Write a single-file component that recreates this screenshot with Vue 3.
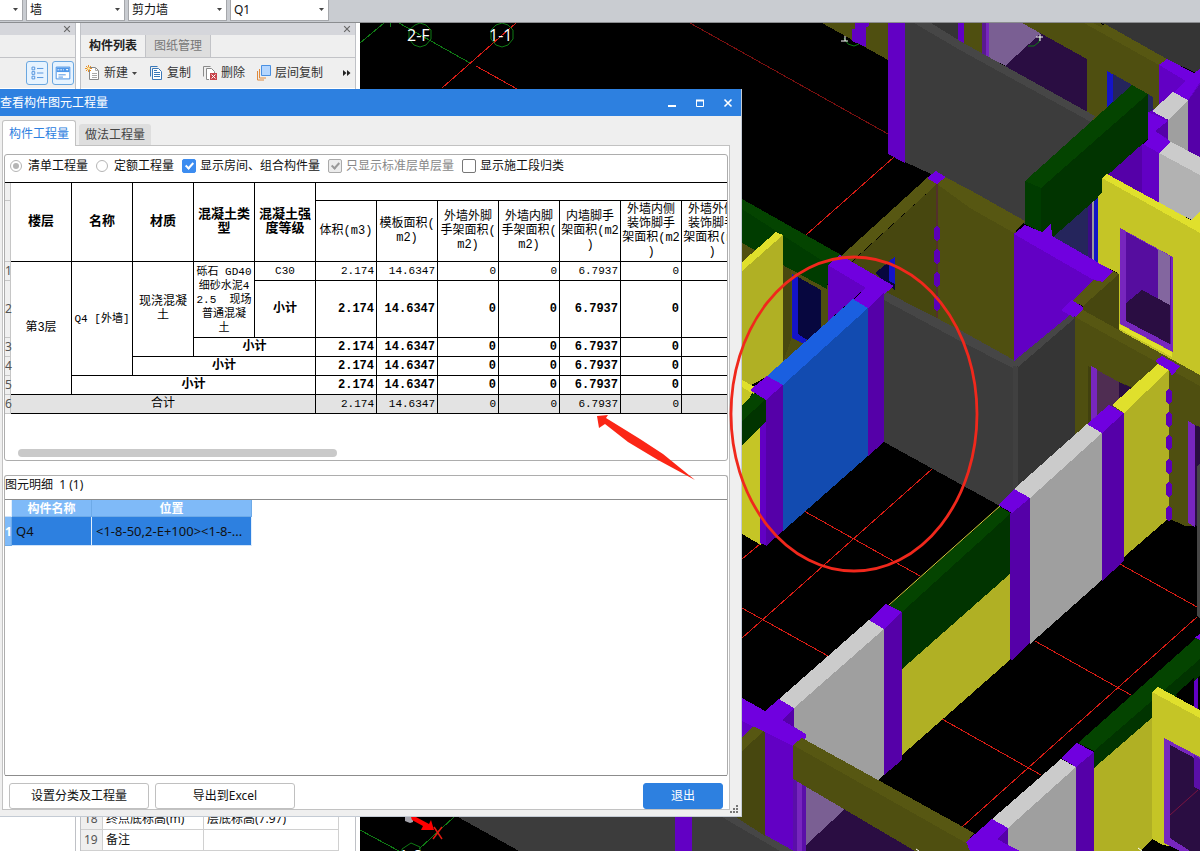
<script setup>
import { ref } from 'vue'

const combos = [
  { id: 'type', label: '构件类型', value: '墙' },
  { id: 'kind', label: '构件类别', value: '剪力墙' },
  { id: 'member', label: '构件', value: 'Q1' }
]

const billType = ref('list')
const showRoom = ref(true)
const standardOnly = ref(true)
const showStage = ref(false)

const headings = [
  ['楼层'],
  ['名称'],
  ['材质'],
  ['混凝土类', '型'],
  ['混凝土强', '度等级']
]
const measures = [
  ['体积(m3)'],
  ['模板面积(', 'm2)'],
  ['外墙外脚', '手架面积(', 'm2)'],
  ['外墙内脚', '手架面积(', 'm2)'],
  ['内墙脚手', '架面积(m2', ')'],
  ['外墙内侧', '装饰脚手', '架面积(m2', ')'],
  ['外墙外侧', '装饰脚手', '架面积(m2', ')']
]
const values = ['2.174', '14.6347', '0', '0', '6.7937', '0', '0']

const rows = [
  {
    cls: 'plain',
    cells: [
      { lines: ['第3层'], rows: 5, cls: 'big' },
      { lines: ['Q4 [外墙]'], rows: 4 },
      { lines: ['现浇混凝', '土'], rows: 3, cls: 'big' },
      { lines: ['砾石 GD40', '细砂水泥4', '2.5  现场', '普通混凝', '土'], rows: 2 },
      { lines: ['C30'] }
    ]
  },
  { cls: 'sub tall', cells: [{ lines: ['小计'] }] },
  { cls: 'sub', cells: [{ lines: ['小计'], cols: 2 }] },
  { cls: 'sub', cells: [{ lines: ['小计'], cols: 3 }] },
  { cls: 'sub', cells: [{ lines: ['小计'], cols: 4 }] },
  { cls: 'total', cells: [{ lines: ['合计'], cols: 5 }] }
]

// wall and beam colours
const c = {
  pt: '#7000df', pf: '#6200c4', pd: '#5500a8', fr: '#7726be',
  ot: '#575712', of: '#4f4f10', od: '#47470f',
  gt: '#464646', gf: '#3c3c3c', gd: '#353535',
  bt: '#044400', bs: '#003c00', bf: '#013400',
  yt: '#e0e02c', yf: '#c5c526', yd: '#b0b024',
  wt: '#cbcbcb', wf: '#9f9f9f', wl: '#b2b2b2',
  glass: '#2a0d42', haze: '#7a5f93', blue: '#1414c8', navy: '#07073f'
}

const axes = [
  ['#7a0f0f', 690, 23, 888, 134],
  ['#d81c14', 894, 157, 806, 235],
  ['#d81c14', 516, 23, 442, 88],
  ['#d81c14', 476, 66, 517, 89],
  ['#0f7a14', 360, 43, 384, 23],
  ['#0f7a14', 390, 23, 390, 27],
  ['#0f7a14', 399, 23, 470, 63],
  ['#0f7a14', 360, 830, 399, 851],
  ['#0f7a14', 454, 817, 419, 849],
  ['#d81c14', 804, 511, 920, 576],
  ['#d81c14', 932, 469, 742, 638],
  ['#d81c14', 760, 544, 742, 559],
  ['#d81c14', 742, 608, 828, 656],
  ['#d81c14', 942, 719, 1041, 775],
  ['#d81c14', 1120, 564, 1197, 607],
  ['#d81c14', 1035, 641, 1131, 695],
  ['#d81c14', 1197, 617, 962, 827]
]

// painted back to front
const solids = [
  // top row of rooms
  [c.of, '822,23 900,23 900,66 888,60'],
  [c.pf, '855,23 869,23 869,26 866,27 866,47 852,41 852,29 855,29'],
  [c.gd, '917,23 960,23 960,50'],
  [c.pf, '958,23 964,23 964,45 958,42'],
  [c.of, '964,23 983,23 983,56 964,46'],
  ['#5a1a90', '982,23 986,23 986,58 982,56'],
  [c.fr, '986,23 989,23 989,60 986,58'],
  [c.haze, '989,23 1022,23 1041,33 1006,66 989,58'],
  [c.glass, '1005,66 1041,33 1088,59 1088,116'],
  [c.of, '1022,23 1100,23 1160,62 1160,125 1087,120 1087,59'],
  [c.gd, '1098,23 1200,23 1200,75 1167,59 1105,24'],
  [c.ot, '1084,23 1093,23 1101,27 1105,24 1167,59 1159,65'],
  [c.blue, '1107,71 1114,75 1114,110 1107,110'],
  ['#25255c', '1113,74 1153,97 1153,120 1113,115'],
  [c.pf, '888,23 905,23 905,163 888,154'],
  [c.gf, '905,23 914,23 1092,120 1092,145 1025,224 970,192 905,162'],
  [c.gt, '914,23 931,23 960,41 1095,116 1091,122 960,50'],
  // right hand purple walls
  [c.pf, '1159,64 1200,82 1200,160 1175,160 1148,139 1148,113 1159,106'],
  [c.pt, '1159,65 1167,59 1194,73 1200,69 1200,82 1188,100 1173,93 1186,81'],
  [c.pd, '1188,101 1200,84 1200,158 1188,152'],
  [c.wt, '1152,111 1173,92 1188,100 1168,120'],
  [c.wf, '1168,120 1188,101 1188,152 1168,142'],
  [c.pd, '1168,119 1155,131 1168,139'],
  [c.pd, '1107,175 1143,143 1143,194'],
  [c.pf, '1142,143 1159,152 1159,203 1142,194'],
  [c.pt, '1148,112 1168,121 1155,131 1171,142 1159,153 1143,144 1148,139'],
  [c.wt, '1171,142 1200,157 1200,175 1159,153'],
  [c.wl, '1159,153 1200,175 1200,212 1192,220 1159,203'],
  // slate glazing behind the green beam
  ['#25255c', '1050,237 1088,204 1088,258'],
  ['#3a0a86', '1088,204 1093,200 1093,261 1088,258'],
  ['#9a9a9a', '1092,200 1094,200 1094,261 1092,261'],
  [c.blue, '1094,199 1098,195 1098,263 1094,261'],
  // olive corner
  [c.od, '937,184 937,345 884,300 884,293 894,286 852,262'],
  [c.ot, '840,257 928,177 937,184 850,263'],
  [c.of, '937,184 1016,228 1016,362 960,334 937,320'],
  [c.ot, '937,184 945,177 970,190 1025,221 1014,233 970,208'],
  [c.pt, '927,178 936,171 946,177 937,184'],
  [c.od, '884,270 893,257 898,257 898,295 884,290'],
  [c.navy, '875,273 895,257 895,290'],
  [c.blue, '889,261 895,257 895,284 889,281'],
  ['#53302c', '936,184 938,184 938,318 936,317'],
  // purple slab and olive pillar
  [c.pf, '1014,233 1103,281 1072,302 1076,314 1014,361'],
  [c.bs, '1025,181 1041,188 1041,232 1025,224'],
  [c.bf, '1041,188 1148,94 1148,139 1102,180 1102,194 1053,237 1041,232'],
  [c.bt, '1025,181 1132,85 1148,94 1041,188'],
  [c.pt, '1014,234 1025,225 1042,232 1051,224 1052,236 1113,271 1102,282 1092,279'],
  // yellow wall, upper right
  [c.yf, '1102,178 1200,230 1200,376 1172,360 1118,330 1118,273 1098,263 1098,196 1102,193'],
  [c.yt, '1102,178 1107,174 1191,220 1200,212 1200,233'],
  [c.fr, '1120,228 1173,257 1173,352 1120,324'],
  ['#560d9f', '1126,232 1171,257 1171,344 1126,320'],
  ['#83669f', '1158,249 1170,256 1170,306 1158,299'],
  [c.glass, '1126,303 1142,290 1170,305 1170,344 1126,321'],
  [c.yt, '1119,324 1172,352 1172,357 1118,328'],
  [c.od, '1083,306 1119,274 1119,332 1083,314'],
  [c.ot, '1072,301 1094,280 1103,282 1113,271 1119,274 1083,306'],
  // olive wall, lower right
  [c.of, '1075,317 1200,380 1200,525 1185,526 1168,518 1075,440'],
  [c.ot, '1075,317 1083,310 1200,375 1200,386'],
  ['#41410e', '1088,366 1119,382 1135,388 1108,415 1088,425'],
  [c.fr, '1091,366 1097,369 1097,425 1091,425'],
  ['#4f2d52', '1097,370 1119,382 1119,405 1097,425'],
  [c.glass, '1119,382 1132,388 1119,400'],
  [c.pt, '1061,310 1072,300 1083,307 1083,310 1074,318'],
  [c.fr, '1188,421 1195,425 1195,527 1188,523'],
  [c.glass, '1195,425 1200,427 1200,528 1195,525'],
  [c.gt, '1197,466 1200,463 1200,618 1197,616'],
  // grey walls
  [c.gf, '884,297 1016,365 1016,492 1000,506 884,442'],
  [c.gt, '884,291 960,330 1014,360 1018,367 1013,368 960,341 884,300'],
  [c.gd, '1016,367 1075,316 1075,440 1016,492'],
  [c.gt, '1014,361 1070,315 1075,318 1018,367'],
  ['#404040', '1013,366 1018,367 1018,488 1013,490'],
  // green beam and yellow wall on the left
  [c.of, '742,235 828,285 828,335 783,362 742,345'],
  [c.bs, '742,205 830,262 827,289 742,243'],
  [c.bt, '742,199 843,256 829,265 742,209'],
  [c.od, '783,265 791,270 791,340 783,362'],
  [c.blue, '792,274 798,277 798,331 808,338 804,344 792,338'],
  [c.navy, '798,277 821,290 821,335 809,341 798,334'],
  [c.yd, '742,270 783,235 783,362 766,377 742,390'],
  [c.yt, '742,262 776,232 783,235 742,271'],
  [c.yf, '742,385 756,392 742,405'],
  [c.yt, '742,380 755,387 752,393 742,387'],
  // ringed corner
  [c.pf, '828,265 868,286 853,299 828,321'],
  [c.pt, '828,265 840,255 894,286 868,308 853,300 866,288'],
  [c.pd, '868,308 884,293 884,442 868,456'],
  ['#124bb0', '783,385 868,308 868,456 783,531'],
  ['#1a5fe0', '767,376 853,299 868,308 783,385'],
  [c.yf, '742,440 761,425 761,545 742,534'],
  [c.pf, '760,425 767,400 767,546 760,543'],
  [c.pd, '766,400 783,385 783,531 766,546'],
  [c.bf, '742,412 752,393 766,400 766,422 742,445'],
  [c.bt, '742,405 754,393 766,399 742,421'],
  [c.pt, '750,390 767,376 783,385 766,400'],
  // long wall
  [c.yd, '1124,413 1169,370 1169,518 1124,557'],
  [c.yt, '1112,405 1158,364 1169,370 1124,413'],
  [c.pt, '1155,361 1162,356 1180,366 1172,376 1169,370 1158,364'],
  [c.pd, '1102,433 1124,413 1124,561 1102,581'],
  [c.pt, '1087,424 1109,405 1124,413 1102,433'],
  [c.wf, '1030,498 1102,433 1102,580 1030,644'],
  [c.wt, '1014,489 1087,424 1102,433 1030,498'],
  [c.yd, '902,669 1011,573 1011,659 902,755'],
  [c.bf, '902,612 1011,513 1011,573 902,669'],
  [c.bt, '889,606 1000,507 1011,513 902,612'],
  [c.pd, '1010,513 1030,498 1030,643 1012,660 1010,659'],
  [c.pt, '998,505 1014,489 1030,498 1012,513'],
  [c.wf, '794,708 884,629 884,775 878,780 806,742 794,735'],
  [c.wt, '779,699 869,620 884,629 794,708'],
  [c.pd, '884,629 902,612 902,760 884,775'],
  [c.pt, '869,620 886,604 902,612 884,629'],
  // bottom left corner
  [c.gf, '458,817 722,817 793,851 519,851'],
  [c.gt, '722,817 742,817 795,851 780,851'],
  [c.pf, '675,817 692,817 692,851 675,851'],
  [c.pf, '742,715 757,722 742,738'],
  [c.od, '736,817 742,750 765,730 765,836'],
  [c.ot, '742,738 755,724 765,730 742,751'],
  [c.haze, '806,780 850,806 806,845'],
  [c.glass, '845,809 916,851 806,851 806,845'],
  [c.pf, '765,730 794,743 794,851 765,835'],
  ['#5a0fa8', '793,775 806,782 806,851 793,851'],
  [c.fr, '797,778 802,781 802,851 797,851'],
  [c.pd, '794,708 782,720 794,728'],
  [c.pt, '742,698 765,711 779,699 794,708 782,720 806,734 806,738 793,746 765,732 742,721'],
  [c.of, '793,745 966,842 970,851 915,851 793,779'],
  [c.ot, '793,745 802,738 974,833 966,843'],
  // bottom right rooms
  [c.pt, '1194,638 1200,634 1200,642'],
  [c.pf, '1194,677 1198,673 1198,712 1194,709'],
  [c.yd, '1094,768 1152,717 1152,840 1140,851 1094,851'],
  [c.bf, '1094,751 1200,657 1200,676 1094,768'],
  [c.bt, '1078,743 1196,638 1200,640 1200,659 1094,751'],
  ['#000', '1176,694 1194,678 1194,709 1188,709'],
  [c.yf, '1152,692 1200,716 1200,851 1163,845 1152,839'],
  [c.yt, '1152,692 1158,687 1200,710 1200,718'],
  [c.fr, '1164,738 1200,757 1200,851 1180,851 1164,843'],
  [c.glass, '1170,745 1200,761 1200,851 1190,851 1170,838'],
  ['#5a0fa8', '1194,755 1200,759 1200,790 1194,787'],
  [c.pd, '1076,767 1094,752 1094,851 1076,851'],
  [c.pt, '1061,758 1077,743 1094,752 1076,767'],
  [c.wf, '1008,828 1076,767 1076,851 1020,851 1008,846'],
  [c.wt, '992,819 1061,759 1076,767 1008,828'],
  [c.pt, '966,842 992,819 1008,828 997,839 1020,851 970,851'],
  [c.pd, '997,839 1008,829 1008,845']
]

const ties = [
  [934, 226], [934, 249], [934, 272], [934, 296],
  [1166, 389], [1166, 412], [1166, 435], [1166, 459], [1166, 482], [1166, 506]
]

// the lit pixels of the wall's far edge
const edges = [
  ['#d8d83a', 889, 605, 1000, 506],
  ['#7a1440', 1170, 815, 1198, 790]
]
</script>

<template>
  <div class="app">
    <header class="top-bar">
      <div class="combo first">
        <select aria-label="楼层"><option></option></select>
        <svg class="caret" viewBox="0 0 7 4"><path d="M0 0h7L3.5 4z" /></svg>
      </div>
      <div v-for="item in combos" :key="item.id" class="combo">
        <select :id="item.id" :aria-label="item.label"><option>{{ item.value }}</option></select>
        <svg class="caret" viewBox="0 0 7 4"><path d="M0 0h7L3.5 4z" /></svg>
      </div>
    </header>

    <main class="workspace">
      <section class="panel">
        <div class="panel-head">
          <button class="close" aria-label="关闭"><svg viewBox="0 0 7 7"><path d="M1 1l5 5M6 1L1 6" /></svg></button>
        </div>
        <div class="panel-tabs"></div>
        <div class="tools end">
          <button class="view-btn" aria-label="列表">
            <svg viewBox="0 0 22 24">
              <path d="M5.500 5.500h3v3h-3zM5.500 10.500h3v3h-3zM5.500 15.500h3v3h-3z" fill="none" stroke="#4d8fdc" />
              <path d="M11 7h7M11 12h7M11 17h7" stroke="#4d8fdc" />
            </svg>
          </button>
          <button class="view-btn" aria-label="图形">
            <svg viewBox="0 0 22 24">
              <path d="M3.500 5.500h15v13h-15z" fill="#fff" stroke="#3f8be0" />
              <path d="M4 6h14v5H4z" fill="#4d97ea" />
              <path d="M6 14h8M6 16.500h5" stroke="#3f8be0" />
              <path d="M5 8.500h2M8 8.500h2M11 8.500h1" stroke="#fff" />
              <path d="M14 7.500h3l-1.500 2z" fill="#fff" />
            </svg>
          </button>
        </div>
        <div class="blank"></div>
      </section>

      <section class="panel">
        <div class="panel-head">
          <button class="close" aria-label="关闭"><svg viewBox="0 0 7 7"><path d="M1 1l5 5M6 1L1 6" /></svg></button>
        </div>
        <div class="panel-tabs">
          <button class="panel-tab on">构件列表</button>
          <button class="panel-tab">图纸管理</button>
        </div>
        <div class="tools">
          <button class="tool">
            <svg viewBox="0 0 16 16">
              <path d="M4.500 2.500h6l3 3v9h-9z" fill="#fff" stroke="#888" />
              <path d="M10.500 2.500v3h3M7 8.500h5M7 10.500h5M7 12.500h5" fill="none" stroke="#aaa" />
              <path d="M1 1l5 5M6 1L1 6M3.500 0v7M0 3.500h7" stroke="#e8912a" />
              <circle cx="3.500" cy="3.500" r="1.300" fill="#fff3b0" />
            </svg>
            新建
            <svg class="caret small" viewBox="0 0 7 4"><path d="M0 0h7L3.500 4z" /></svg>
          </button>
          <button class="tool">
            <svg viewBox="0 0 16 16">
              <path d="M2.500 11.500v-10h7" fill="none" stroke="#3a78b8" />
              <path d="M4.500 3.500h6l3 3v8h-9z" fill="#fff" stroke="#3a78b8" />
              <path d="M6 7.500h6M6 9.500h6M6 11.500h6M6 5.500h3" stroke="#3a78b8" />
            </svg>
            复制
          </button>
          <button class="tool">
            <svg viewBox="0 0 16 16">
              <path d="M1.500 11.500v-10h7" fill="none" stroke="#8a8a8a" />
              <path d="M7 14.500H4.500v-11h5l3 3V8" fill="#fff" stroke="#8a8a8a" />
              <path d="M8 8h7v7H8z" fill="#c8434a" />
              <path d="M9.500 9.500l4 4M13.500 9.500l-4 4" stroke="#fff" />
            </svg>
            删除
          </button>
          <button class="tool">
            <svg viewBox="0 0 16 16">
              <path d="M1.500 6v9H8M3.500 4v9H10" fill="none" stroke="#e08a3c" />
              <path d="M5.500 0.500h9v10h-9z" fill="#b4d6ff" stroke="#4a90e2" />
            </svg>
            层间复制
          </button>
          <button class="more" aria-label="更多"><svg viewBox="0 0 8 6"><path d="M0 0l3.500 3L0 6zM4 0l3.500 3L4 6z" /></svg></button>
        </div>
        <div class="blank">
          <table class="props">
            <tbody>
              <tr><th>18</th><td>终点底标高(m)</td><td>层底标高(7.97)</td></tr>
              <tr><th>19</th><td>备注</td><td></td></tr>
            </tbody>
          </table>
        </div>
      </section>

      <section class="viewport">
        <svg viewBox="360 23 840 828" preserveAspectRatio="xMinYMin slice">
          <g class="axes">
            <line v-for="(a, i) in axes" :key="'a' + i" :stroke="a[0]" :x1="a[1]" :y1="a[2]" :x2="a[3]" :y2="a[4]" />
          </g>
          <g class="solids">
            <polygon v-for="(s, i) in solids" :key="i" :fill="s[0]" :points="s[1]" />
            <path v-for="(t, i) in ties" :key="'t' + i" :d="`M${t[0]} ${t[1] + 2}l3 -2l3 2v11l-3 2l-3 -2z`" fill="#5c00b8" />
          </g>
          <line v-for="(a, i) in edges" :key="'e' + i" :stroke="a[0]" :x1="a[1]" :y1="a[2]" :x2="a[3]" :y2="a[4]" />
          <g class="marks">
            <path d="M415 25l5 -2l6 2l5 5v9l-5 6l-6 2l-6 -2l-5 -6v-9z" />
            <path d="M496 25l6 -2l6 2l5 5v9l-5 6l-6 2l-6 -2l-5 -6v-9z" />
            <path d="M844 38l4 6l6 2l5 -2" />
            <path d="M1028 46l6 0l5 -4l1 -5" />
            <path d="M402 851v-2l9 -6l9 4v4" />
          </g>
          <text class="axis" x="407" y="41">2-F</text>
          <text class="axis" x="489" y="41">1-1</text>
          <path d="M841 41h7M845 36v5M1036 37h7M1040 34v7M1138 848l4 3M916 849l3 2" stroke="#fff" />
          <text class="axis" x="399" y="862">1-8</text>
          <path d="M405 817h8v5l-3 1l-5 -2z" fill="#a5a5ad" />
          <path d="M411 817h5l13 7l2 -4l3 10l-13 0l2 -4l-11 -6z" fill="#f00" />
          <path d="M434 827l8 12M442 827l-9 12" stroke="#e01a10" stroke-width="1.500" />
        </svg>
      </section>
    </main>

    <section class="dialog" role="dialog" aria-label="查看构件图元工程量">
      <div class="title">
        <span>查看构件图元工程量</span>
        <div class="win-btns">
          <button aria-label="最小化"><svg viewBox="0 0 10 10"><path d="M1 8h8" stroke-width="2" /></svg></button>
          <button aria-label="最大化"><svg viewBox="0 0 10 10"><path d="M1.500 2.500h7v6h-7z" /><path d="M1 2.500h8" stroke-width="2" /></svg></button>
          <button aria-label="关闭"><svg viewBox="0 0 10 10"><path d="M1.500 1.500l7 7M8.500 1.500l-7 7" stroke-width="1.600" /></svg></button>
        </div>
      </div>
      <div class="tabs">
        <button class="tab on">构件工程量</button>
        <button class="tab">做法工程量</button>
      </div>

      <div class="body">
        <div class="group summary">
          <div class="options">
            <label class="radio"><input v-model="billType" type="radio" name="bill" value="list"><span>清单工程量</span></label>
            <label class="radio"><input v-model="billType" type="radio" name="bill" value="quota"><span>定额工程量</span></label>
            <label><input v-model="showRoom" type="checkbox"><span>显示房间、组合构件量</span></label>
            <label class="disabled"><input v-model="standardOnly" type="checkbox" disabled><span>只显示标准层单层量</span></label>
            <label><input v-model="showStage" type="checkbox"><span>显示施工段归类</span></label>
          </div>
          <div class="sheet">
            <table class="grid">
              <colgroup>
                <col class="num">
                <col v-for="n in 12" :key="n" class="unit">
              </colgroup>
              <thead>
                <tr class="h1">
                  <th class="idx"></th>
                  <th v-for="h in headings" :key="h[0] + h[1]" rowspan="2">
                    <div v-for="l in h" :key="l">{{ l }}</div>
                  </th>
                  <th colspan="7"></th>
                </tr>
                <tr class="h2">
                  <th class="idx"></th>
                  <th v-for="(m, i) in measures" :key="i" class="measure">
                    <div v-for="l in m" :key="l">{{ l }}</div>
                  </th>
                </tr>
              </thead>
              <tbody>
                <tr v-for="(r, i) in rows" :key="i" :class="r.cls">
                  <th class="idx">{{ i + 1 }}</th>
                  <td v-for="(cell, j) in r.cells" :key="j" :class="cell.cls" :rowspan="cell.rows || 1" :colspan="cell.cols || 1">
                    <div v-for="l in cell.lines" :key="l">{{ l }}</div>
                  </td>
                  <td v-for="(v, j) in values" :key="'v' + j" class="val">{{ v }}</td>
                </tr>
              </tbody>
            </table>
            <div class="scroll"><div class="thumb"></div></div>
          </div>
        </div>

        <div class="group detail">
          <div class="detail-title">图元明细&nbsp; 1 (1)</div>
          <div class="list">
            <table class="items">
              <thead>
                <tr><td class="corner"></td><th>构件名称</th><th class="pos">位置</th></tr>
              </thead>
              <tbody>
                <tr><th class="corner">1</th><td>Q4</td><td class="pos">&lt;1-8-50,2-E+100&gt;&lt;1-8-...</td></tr>
              </tbody>
            </table>
          </div>
        </div>

        <div class="actions">
          <button class="btn">设置分类及工程量</button>
          <button class="btn">导出到Excel</button>
          <button class="btn primary">退出</button>
        </div>
      </div>
      <svg class="grip" viewBox="0 0 8 8"><path d="M6 0h2v2H6zM3 3h2v2H3zM6 3h2v2H6zM0 6h2v2H0zM3 6h2v2H3zM6 6h2v2H6z" /></svg>
    </section>

    <svg class="notes" viewBox="0 0 1200 851" preserveAspectRatio="xMinYMin slice">
      <ellipse cx="854" cy="414" rx="123" ry="157" fill="none" stroke="#f0281c" stroke-width="2.800" />
      <path d="M597 416L608 415L606 418L640 439L663 454L695 480L658 460L628 442L605 424L599 428z" fill="#fb2616" />
    </svg>
  </div>
</template>

<style>
body {
  margin: 0;
  overflow: hidden;
}
</style>

<style scoped>
.app {
  position: relative;
  display: flex;
  flex-direction: column;
  height: 100vh;
  overflow: hidden;
  background: #fff;
  color: #111;
  font-family: "Noto Sans", "Noto Sans CJK SC", sans-serif;
  font-size: 12px;
  line-height: 16px;
}

button,
select {
  font: inherit;
  color: inherit;
  padding: 0;
  margin: 0;
  border: none;
  background: none;
}

table {
  border-spacing: 0;
}

/* top bar */
.top-bar {
  display: flex;
  gap: 3px;
  height: 22px;
  flex: none;
  background: #c9ccd1;
  border-bottom: 1px solid #8b8d90;
}

.combo {
  position: relative;
  width: 99px;
  height: 21px;
  background: #fff;
  border: 1px solid #a5a7ab;
  border-top: none;
  box-sizing: border-box;
}

.combo.first {
  width: 23px;
  border-left: none;
}

.combo select {
  width: 100%;
  height: 100%;
  padding-left: 3px;
  appearance: none;
}

.caret {
  position: absolute;
  right: 4px;
  top: 8px;
  width: 5px;
  height: 3px;
  fill: #444;
  pointer-events: none;
}

.caret.small {
  position: static;
  width: 5px;
  height: 3px;
  margin-left: 1px;
}

/* docked panels */
.workspace {
  flex: 1;
  display: grid;
  grid-template-columns: 76px 276px minmax(0, 1fr);
  gap: 4px;
  min-height: 0;
}

.panel {
  display: flex;
  flex-direction: column;
  min-width: 0;
  box-sizing: border-box;
  background: #efefef;
  border-right: 1px solid #bfc1c6;
}

.panel + .panel {
  border-left: 1px solid #bfc1c6;
}

.panel-head {
  display: flex;
  justify-content: flex-end;
  align-items: center;
  height: 12px;
  padding-right: 4px;
  background: #d5d6db;
}

.close {
  display: flex;
}

.close svg {
  width: 8px;
  height: 8px;
  fill: none;
  stroke: #666;
}

.panel-tabs {
  display: flex;
  height: 22px;
  border-bottom: 1px solid #c2c3c7;
}

.panel-tab {
  width: 65px;
  background: #dedede;
  color: #777;
  border-right: 1px solid #c2c3c7;
}

.panel-tab.on {
  background: #f0f0f0;
  color: #222;
  font-weight: bold;
}

.tools {
  display: flex;
  align-items: center;
  gap: 11px;
  height: 30px;
  padding: 0 4px;
}

.tools.end {
  justify-content: flex-end;
  gap: 4px;
  padding: 0 1px;
}

.view-btn {
  width: 22px;
  height: 24px;
  background: #e6f3ff;
  border: 1px solid #6aa7e0;
  border-radius: 3px;
}

.view-btn svg {
  display: block;
  width: 100%;
  height: 100%;
}

.tool {
  display: flex;
  align-items: center;
  gap: 3px;
  color: #333;
  white-space: nowrap;
}

.tool > svg:first-child {
  width: 16px;
  height: 16px;
}

.more {
  margin-left: auto;
}

.more svg {
  display: block;
  width: 8px;
  height: 6px;
  fill: #222;
}

.blank {
  flex: 1;
  display: flex;
  align-items: flex-end;
  background: #fff;
}

.props {
  width: 258px;
  table-layout: fixed;
}

.props th,
.props td {
  height: 20px;
  padding: 0 0 0 3px;
  border-right: 1px solid #d0d0d0;
  border-bottom: 1px solid #d0d0d0;
  text-align: left;
}

.props th {
  width: 18px;
  background: #efefef;
  color: #555;
  font-weight: normal;
}

.props td:nth-child(2) {
  width: 97px;
}

.viewport {
  min-width: 0;
  overflow: hidden;
  background: #000;
}

.viewport svg {
  display: block;
  width: 100%;
  height: 100%;
}

.axes,
.solids {
  shape-rendering: crispEdges;
}

.marks {
  fill: none;
  stroke: #0f7a14;
}

.axis {
  fill: #fff;
  font-family: "Open Sans", sans-serif;
  font-size: 16px;
}

/* dialog window */
.dialog {
  position: absolute;
  left: 0;
  top: 89px;
  bottom: 34px;
  width: 742px;
  max-width: 100%;
  display: flex;
  flex-direction: column;
  box-sizing: border-box;
  background: #efefef;
  border-right: 1px solid #c4cbd4;
  border-bottom: 1px solid #c4cbd4;
}

.title {
  display: flex;
  justify-content: space-between;
  align-items: center;
  height: 27px;
  flex: none;
  background: #2d80e0;
  color: #fff;
}

.win-btns {
  display: flex;
  gap: 18px;
  padding-right: 8px;
}

.win-btns svg {
  display: block;
  width: 10px;
  height: 10px;
  fill: none;
  stroke: #fff;
}

.tabs {
  display: flex;
  align-items: flex-end;
  gap: 3px;
  height: 29px;
  flex: none;
  padding-left: 2px;
}

.tab {
  width: 72px;
  height: 21px;
  background: #dedede;
  color: #444;
  border-radius: 3px 3px 0 0;
}

.tab.on {
  z-index: 1;
  width: 74px;
  height: 26px;
  box-sizing: border-box;
  margin-bottom: -1px;
  background: #fff;
  color: #2d80e0;
  border: 1px solid #c2c2c2;
  border-bottom: none;
}

.body {
  flex: 1;
  display: flex;
  flex-direction: column;
  min-height: 0;
  margin: 0 11px 6px 2px;
  padding: 8px 1px 0;
  background: #fff;
  border: 1px solid #c2c2c2;
}

.group {
  border: 1px solid #adadad;
  border-radius: 3px;
}

.summary {
  display: flex;
  flex-direction: column;
  height: 305px;
  flex: none;
  margin-bottom: 14px;
}

.options {
  display: flex;
  align-items: center;
  gap: 8px;
  height: 21px;
  flex: none;
  padding: 0 5px 6px;
  white-space: nowrap;
}

.options label {
  display: flex;
  align-items: center;
  gap: 4px;
}

.options .radio {
  gap: 6px;
}

.options .disabled {
  color: #888;
}

.options input {
  appearance: none;
  width: 14px;
  height: 14px;
  margin: 0;
  border: 1px solid #777;
  border-radius: 2px;
  background: #fff;
}

.options input[type="checkbox"]:checked {
  border-color: #3c8cf0;
  background: #3c8cf0;
}

.options input[type="checkbox"]:checked::before {
  content: "";
  display: block;
  width: 3px;
  height: 6px;
  margin: 1px 4px;
  border: solid #fff;
  border-width: 0 2px 2px 0;
  transform: rotate(42deg);
}

.options input[type="checkbox"]:disabled {
  border-color: #aaa;
  background: #ececec;
}

.options input[type="checkbox"]:disabled::before {
  border-color: #999;
}

.options input[type="radio"] {
  width: 12px;
  height: 12px;
  border-color: #b5b5b5;
  border-radius: 50%;
}

.options input[type="radio"]:checked::before {
  content: "";
  display: block;
  width: 6px;
  height: 6px;
  margin: 2px;
  border-radius: 50%;
  background: #b5b5b5;
}

.sheet {
  flex: 1;
  display: flex;
  flex-direction: column;
  justify-content: space-between;
  overflow: hidden;
}

.grid {
  width: 738px;
  flex: none;
  table-layout: fixed;
  border-top: 1px solid #000;
  font-family: "Liberation Mono", "Noto Sans CJK SC", monospace;
  line-height: 14px;
  white-space: pre;
  text-align: center;
  color: #000;
}

.num {
  width: 6px;
}

.unit {
  width: 61px;
}

.grid th,
.grid td {
  height: 18px;
  padding: 0;
  border-right: 1px solid #000;
  border-bottom: 1px solid #000;
}

.grid .h1 th {
  height: 17px;
  font-size: 13px;
}

.grid .h2 th {
  height: 60px;
}

.grid .h2 .measure {
  font-weight: normal;
  font-size: 12px;
}

.grid .plain td {
  font-size: 11px;
}

.grid .plain .big {
  font-size: 12px;
}

.grid .tall td {
  height: 56px;
}

.grid .sub td {
  font-weight: bold;
}

.grid .total td {
  background: #e3e3e3;
}

.grid .total .val {
  font-size: 11px;
}

.grid .val {
  padding-right: 2px;
  text-align: right;
}

.grid .idx {
  border-right: 1px solid #c6c6c6;
  border-bottom: 1px solid #c6c6c6;
  background: #f0f0f0;
  color: #555;
  font-family: "Noto Sans", sans-serif;
  font-size: 12px;
  font-weight: normal;
}

.scroll {
  padding: 0 0 3px 13px;
}

.thumb {
  width: 45%;
  height: 8px;
  border-radius: 4px;
  background: #c9c9c9;
}

.detail {
  flex: 1;
  display: flex;
  flex-direction: column;
  border-bottom: none;
}

.detail-title {
  height: 23px;
  line-height: 18px;
}

.list {
  flex: 1;
  border-top: 1px solid #8c8c8c;
  border-bottom: 1px solid #8c8c8c;
}

.items {
  width: 247px;
  table-layout: fixed;
  line-height: 15px;
}

.items th {
  height: 16px;
  padding: 0;
  border-right: 1px solid #6daae8;
  border-bottom: 1px solid #6daae8;
  background: #7fbaf8;
  color: #fff;
}

.items td {
  width: 75px;
  height: 28px;
  padding: 0 0 0 4px;
  background: #2d80e0;
  border-right: 1px solid #e2effc;
  border-bottom: 1px solid #cfe3fa;
  font-size: 13px;
  white-space: nowrap;
}

.items .corner {
  width: 6px;
  padding: 0;
}

.items td.corner {
  height: 16px;
  background: #fff;
}

.items th.pos {
  width: 159px;
}

.items thead th:nth-child(2) {
  width: 79px;
}

.actions {
  display: flex;
  gap: 6px;
  flex: none;
  padding: 7px 5px 0;
}

.btn {
  width: 140px;
  height: 26px;
  box-sizing: border-box;
  background: #fff;
  border: 1px solid #c0c0c0;
  border-radius: 3px;
}

.btn.primary {
  width: 80px;
  margin-left: auto;
  background: #2d80e0;
  border-color: #2d80e0;
  color: #fff;
}

.grip {
  position: absolute;
  right: 3px;
  bottom: 3px;
  width: 8px;
  height: 8px;
  fill: #777;
}

.notes {
  position: absolute;
  inset: 0;
  width: 100%;
  height: 100%;
  pointer-events: none;
}
</style>
